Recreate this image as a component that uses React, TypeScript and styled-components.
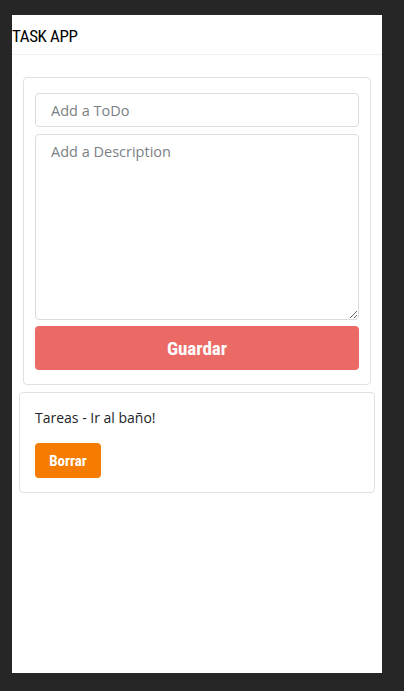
import styled, { createGlobalStyle } from 'styled-components';

const GlobalStyle = createGlobalStyle`
  html, body {
    margin: 0;
    background: #262626;
  }
  * { box-sizing: border-box; }
`;

const Page = styled.div`
  padding: 15px 22px 18px 12px;
  height: 691px;
`;

const Panel = styled.div`
  background: #fff;
  height: 658px;
  display: flex;
  flex-direction: column;
`;

const Header = styled.header`
  height: 40px;
  border-bottom: 1px solid #f1f1f1;
  display: flex;
  align-items: center;
  padding-top: 2px;
`;

const Title = styled.h1`
  margin: 0;
  font-family: "Liberation Sans Narrow", "Roboto Condensed", Roboto, sans-serif;
  font-weight: 400;
  font-size: 17px;
  color: #000;
  letter-spacing: -0.4px;
`;

const Spacer = styled.div`
  height: 22px;
`;

const Card = styled.div<{ $inset: number }>`
  margin: 0 ${(p) => p.$inset}px;
  border: 1px solid #dfe1e5;
  border-radius: 4px;
  background: #fff;
`;

const Form = styled.form`
  display: flex;
  flex-direction: column;
  padding: 15px 11px 14px;
`;

const Field = styled.input`
  height: 34px;
  border: 1px solid #d9dce1;
  border-radius: 4px;
  padding: 0 15px;
  font-family: "Open Sans", "Noto Sans", sans-serif;
  font-size: 14.5px;
  color: #333;
  &::placeholder { color: #7b7f85; }
`;

const Area = styled.textarea`
  margin-top: 7px;
  height: 186px;
  border: 1px solid #d9dce1;
  border-radius: 4px;
  padding: 7px 15px;
  font-family: "Open Sans", "Noto Sans", sans-serif;
  font-size: 14.5px;
  color: #333;
  &::placeholder { color: #7b7f85; }
`;

const Button = styled.button<{ $color: string; $big?: boolean }>`
  background: ${(p) => p.$color};
  color: #fff;
  border: none;
  border-radius: 4px;
  font-family: "Liberation Sans Narrow", "Roboto Condensed", Roboto, sans-serif;
  font-weight: 700;
  font-size: ${(p) => (p.$big ? '19px' : '15px')};
  height: ${(p) => (p.$big ? '44px' : '35px')};
  width: ${(p) => (p.$big ? '100%' : '66px')};
  margin-top: ${(p) => (p.$big ? '6px' : '0')};
  cursor: pointer;
`;

const Tasks = styled.div`
  margin-top: 7px;
`;

const TaskBody = styled.div`
  padding: 15px 15px 14px;
`;

const TaskText = styled.p`
  margin: 0 0 16px;
  font-family: "Open Sans", "Noto Sans", sans-serif;
  font-size: 14px;
  color: #212529;
`;

export default function App() {
  return (
    <>
      <GlobalStyle />
      <Page>
        <Panel>
          <Header>
            <Title>TASK APP</Title>
          </Header>
          <Spacer />
          <Card $inset={11}>
            <Form onSubmit={(e) => e.preventDefault()}>
              <Field placeholder="Add a ToDo" />
              <Area placeholder="Add a Description" />
              <Button $color="#ec6a66" $big>Guardar</Button>
            </Form>
          </Card>
          <Tasks>
            <Card $inset={7}>
              <TaskBody>
                <TaskText>Tareas - Ir al baño!</TaskText>
                <Button $color="#f57c00">Borrar</Button>
              </TaskBody>
            </Card>
          </Tasks>
        </Panel>
      </Page>
    </>
  );
}
